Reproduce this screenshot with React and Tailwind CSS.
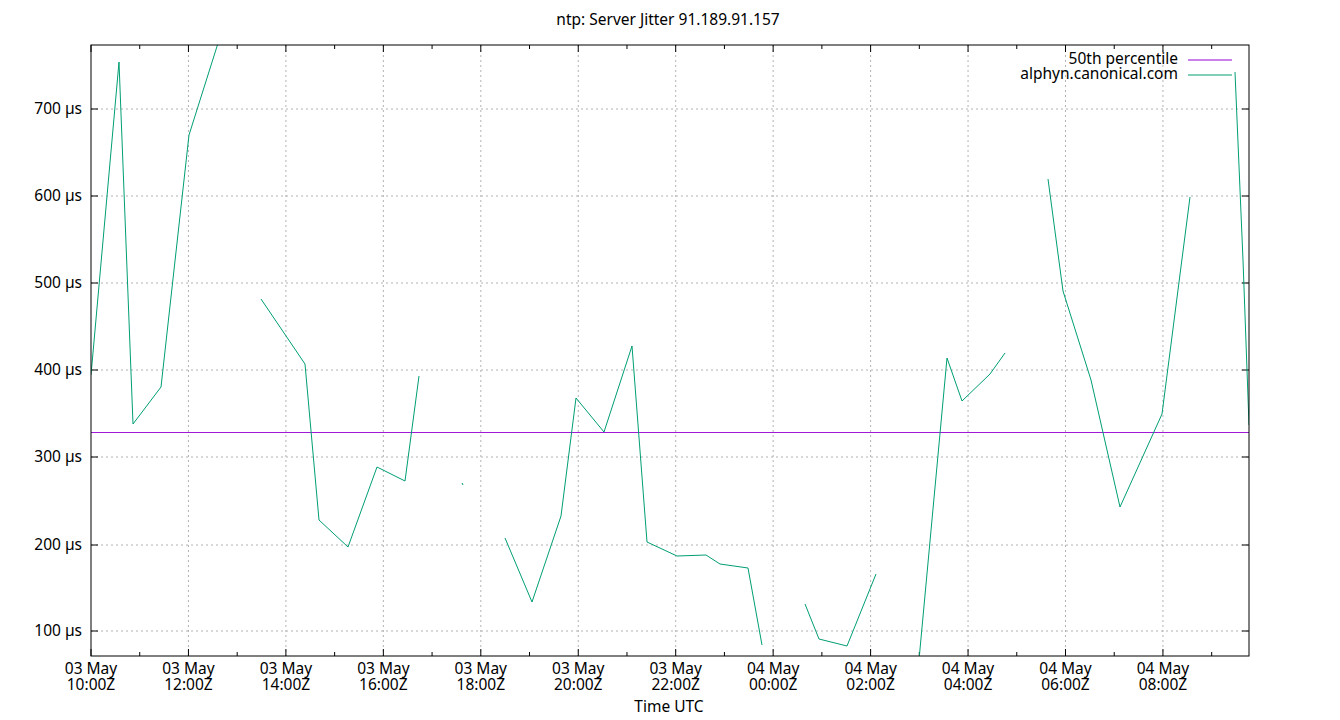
export default function App() {
  const L = 91, R = 1249, T = 45, B = 656;
  const ys = [[109, "700 µs"], [196, "600 µs"], [283, "500 µs"], [370, "400 µs"], [457, "300 µs"], [545, "200 µs"], [631, "100 µs"]];
  const xl = ["10:00Z", "12:00Z", "14:00Z", "16:00Z", "18:00Z", "20:00Z", "22:00Z", "00:00Z", "02:00Z", "04:00Z", "06:00Z", "08:00Z"];
  const xd = ["03 May", "03 May", "03 May", "03 May", "03 May", "03 May", "03 May", "04 May", "04 May", "04 May", "04 May", "04 May"];
  const step = 97.45;
  const segs = [
    [[91,375],[119,62],[133,424],[161,387],[189,135],[219,40]],
    [[261,299],[305,364],[319,520],[348,547],[377,467],[405,481],[419,376]],
    [[462,483],[463,485]],
    [[505,538],[532,602],[561,516],[576,398],[604,432],[632,346],[647,542],[677,556],[706,555],[720,564],[748,568],[762,645]],
    [[805,604],[819,639],[847,646],[876,574]],
    [[919,660],[947,358],[962,401],[990,374],[1005,353]],
    [[1048,179],[1063,291],[1091,380],[1120,507],[1162,414],[1190,197]],
    [[1235,72],[1243,260],[1249,425]],
  ];
  return (
    <div className="w-[1340px] h-[720px] bg-white font-['Liberation_Sans',Arial,sans-serif]">
      <svg width="1340" height="720" fontSize="15.5" fill="#000">
        <defs><clipPath id="c"><rect x={L} y={T} width={R-L} height={B-T} /></clipPath></defs>
        <text x="668" y="25" textAnchor="middle">ntp: Server Jitter 91.189.91.157</text>
        {ys.map(([y, t]) => (
          <g key={t}>
            <line x1={L} x2={R} y1={y} y2={y} stroke="#a0a0a0" strokeDasharray="2 3" strokeWidth="0.8" />
            <line x1={L} x2={L+7} y1={y} y2={y} stroke="#000" />
            <line x1={R-7} x2={R} y1={y} y2={y} stroke="#000" />
            <text x={L-9} y={y+5} textAnchor="end">{t}</text>
          </g>
        ))}
        {Array.from({ length: 24 }).map((_, i) => {
          const x = L + i * step / 2;
          const major = i % 2 === 0;
          return (
            <g key={i}>
              {major && i > 0 && <line x1={x} x2={x} y1={T} y2={B} stroke="#a0a0a0" strokeDasharray="2 3" strokeWidth="0.8" />}
              <line x1={x} x2={x} y1={B} y2={B - (major ? 7 : 4)} stroke="#000" />
              <line x1={x} x2={x} y1={T} y2={T + (major ? 7 : 4)} stroke="#000" />
            </g>
          );
        })}
        {xl.map((t, i) => (
          <g key={t}>
            <text x={L + i * step} y="674" textAnchor="middle">{xd[i]}</text>
            <text x={L + i * step} y="690" textAnchor="middle">{t}</text>
          </g>
        ))}
        <text x="669" y="712" textAnchor="middle">Time UTC</text>
        <line x1={L} x2={R} y1="432.5" y2="432.5" stroke="#9400d3" strokeWidth="0.9" />
        <g clipPath="url(#c)">
          {segs.map((s, i) => (
            <polyline key={i} points={s.map(p => p.join(",")).join(" ")} fill="none" stroke="#009e73" strokeWidth="1" />
          ))}
        </g>
        <rect x={L} y={T} width={R-L} height={B-T} fill="none" stroke="#000" />
        <text x="1178" y="64" textAnchor="end">50th percentile</text>
        <line x1="1188" x2="1232" y1="60" y2="60" stroke="#9400d3" />
        <text x="1178" y="79" textAnchor="end">alphyn.canonical.com</text>
        <line x1="1188" x2="1232" y1="75" y2="75" stroke="#009e73" />
      </svg>
    </div>
  );
}
